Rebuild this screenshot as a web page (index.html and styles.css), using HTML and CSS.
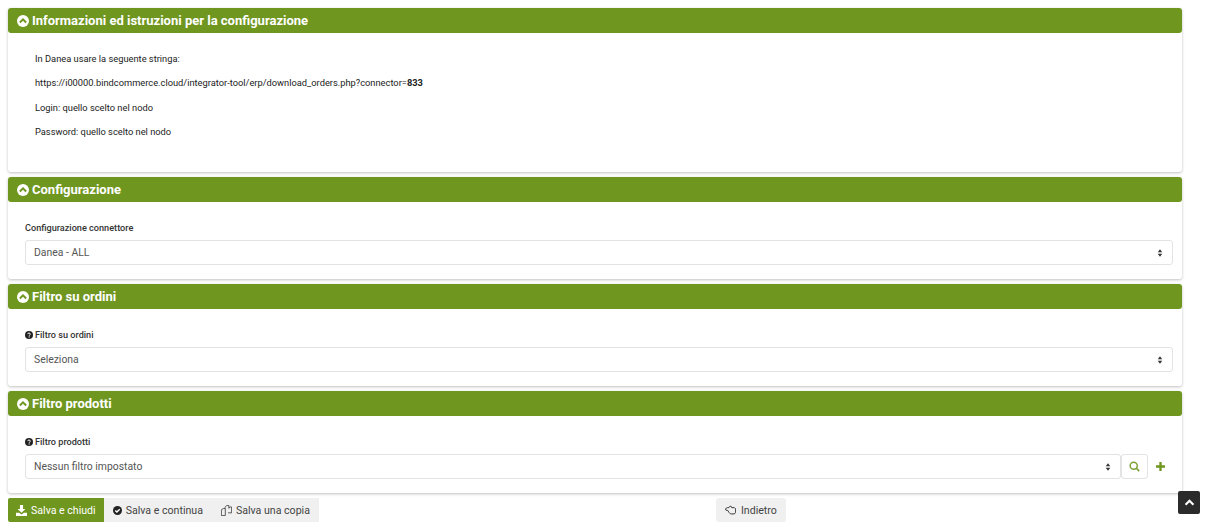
FILE: index.html
```html
<!DOCTYPE html>
<html lang="it">
<head>
    <meta charset="UTF-8">
    <title>Configurazione connettore</title>
    <link rel="stylesheet" href="styles.css">
</head>
<body>
    <section class="panel">
        <h2 class="panel-title">
            <svg class="chevron" viewBox="0 0 16 16"><circle cx="8" cy="8" r="8" fill="#fff"/><path d="M3.800 10 8 5.800l4.200 4.200" fill="none" stroke="#6f961f" stroke-width="2.600"/></svg>
            Informazioni ed istruzioni per la configurazione
        </h2>
        <div class="panel-body info-body">
            <p>In Danea usare la seguente stringa:</p>
            <p>https://i00000.bindcommerce.cloud/integrator-tool/erp/download_orders.php?connector=<b>833</b></p>
            <p>Login: quello scelto nel nodo</p>
            <p>Password: quello scelto nel nodo</p>
        </div>
    </section>

    <section class="panel">
        <h2 class="panel-title">
            <svg class="chevron" viewBox="0 0 16 16"><circle cx="8" cy="8" r="8" fill="#fff"/><path d="M3.800 10 8 5.800l4.200 4.200" fill="none" stroke="#6f961f" stroke-width="2.600"/></svg>
            Configurazione
        </h2>
        <div class="panel-body">
            <label class="field-label">Configurazione connettore</label>
            <div class="select-row">
                <div class="select">Danea - ALL
                    <svg class="updown" viewBox="0 0 8 10"><path d="M4 0 7 4H1zM4 10 1 6h6z" fill="#333"/></svg>
                </div>
            </div>
        </div>
    </section>

    <section class="panel">
        <h2 class="panel-title">
            <svg class="chevron" viewBox="0 0 16 16"><circle cx="8" cy="8" r="8" fill="#fff"/><path d="M3.800 10 8 5.800l4.200 4.200" fill="none" stroke="#6f961f" stroke-width="2.600"/></svg>
            Filtro su ordini
        </h2>
        <div class="panel-body">
            <label class="field-label">
                <svg class="help" viewBox="0 0 16 16"><circle cx="8" cy="8" r="8" fill="#222"/><path d="M5.400 6.200C5.500 4.600 6.600 4 8 4s2.700.8 2.700 2.200c0 1.900-2.400 1.800-2.400 3.300" fill="none" stroke="#fff" stroke-width="1.900"/><rect x="7.200" y="10.800" width="2.200" height="2.200" fill="#fff"/></svg>
                Filtro su ordini
            </label>
            <div class="select-row">
                <div class="select">Seleziona
                    <svg class="updown" viewBox="0 0 8 10"><path d="M4 0 7 4H1zM4 10 1 6h6z" fill="#333"/></svg>
                </div>
            </div>
        </div>
    </section>

    <section class="panel">
        <h2 class="panel-title">
            <svg class="chevron" viewBox="0 0 16 16"><circle cx="8" cy="8" r="8" fill="#fff"/><path d="M3.800 10 8 5.800l4.200 4.200" fill="none" stroke="#6f961f" stroke-width="2.600"/></svg>
            Filtro prodotti
        </h2>
        <div class="panel-body">
            <label class="field-label">
                <svg class="help" viewBox="0 0 16 16"><circle cx="8" cy="8" r="8" fill="#222"/><path d="M5.400 6.200C5.500 4.600 6.600 4 8 4s2.700.8 2.700 2.200c0 1.900-2.400 1.800-2.400 3.300" fill="none" stroke="#fff" stroke-width="1.900"/><rect x="7.200" y="10.800" width="2.200" height="2.200" fill="#fff"/></svg>
                Filtro prodotti
            </label>
            <div class="select-row">
                <div class="select">Nessun filtro impostato
                    <svg class="updown" viewBox="0 0 8 10"><path d="M4 0 7 4H1zM4 10 1 6h6z" fill="#333"/></svg>
                </div>
                <div class="search-btn">
                    <svg viewBox="0 0 14 14" width="11" height="11"><circle cx="6" cy="6" r="4.500" fill="none" stroke="#7da23a" stroke-width="1.900"/><path d="m9.200 9.200 3.800 3.800" stroke="#7da23a" stroke-width="2.200"/></svg>
                </div>
                <div class="add-btn">
                    <svg viewBox="0 0 10 10" width="9" height="9"><path d="M5 0v10M0 5h10" stroke="#6f961f" stroke-width="2.600"/></svg>
                </div>
            </div>
        </div>
    </section>

    <div class="actions">
        <div class="btn-group">
            <a class="btn btn-primary">
                <svg viewBox="0 0 14 14" width="11" height="11"><path d="M5 0h4v5h3L7 10 2 5h3zM0 10h4l3 2 3-2h4v4H0z" fill="#fff"/></svg>
                Salva e chiudi
            </a>
            <a class="btn">
                <svg viewBox="0 0 14 14" width="9" height="9"><circle cx="7" cy="7" r="7" fill="#222"/><path d="m3.500 7 2.500 2.500 4.500-4.500" fill="none" stroke="#fff" stroke-width="2.200"/></svg>
                Salva e continua
            </a>
            <a class="btn">
                <svg viewBox="0 0 14 14" width="11" height="11" fill="none" stroke="#333" stroke-width="1"><path d="M5 4.500V3l2.500-2.500h2.500v4M10 3.500l1.500-1h2V10H9"/><path d="M.5 6 3 4.500h2.500V13.500H.5z"/></svg>
                Salva una copia
            </a>
        </div>
        <a class="btn btn-back">
            <svg viewBox="0 0 14 12" width="11" height="10" fill="none" stroke="#333" stroke-width="1.200"><path d="M.5 4.500 3 3h2L6.500 1 8 1.500 8.500 3H12l1.500 1.500V9L12 11H7L5 9 3.500 6.500H1.500z"/></svg>
            Indietro
        </a>
    </div>

    <a class="to-top">
        <svg viewBox="0 0 12 8" width="11" height="7"><path d="M1.500 6.500 6 2l4.500 4.500" fill="none" stroke="#fff" stroke-width="2.400"/></svg>
    </a>
</body>
</html>
```

FILE: styles.css
```css
body {
    font-family: Roboto, "Liberation Sans", sans-serif;
    margin: 0;
    padding: 8px 24px 0 8px;
    color: #333;
    background: #fff;
}
.panel {
    margin-bottom: 5px;
    border-radius: 3px;
    background: #fff;
    box-shadow: 0 1px 3px rgba(0, 0, 0, 0.25);
}
.panel-title {
    display: flex;
    align-items: center;
    gap: 3px;
    height: 25px;
    margin: 0;
    padding: 0 9px;
    border-radius: 3px;
    background: #6f961f;
    color: #fff;
    font-size: 13px;
    font-weight: 700;
}
.chevron {
    width: 12px;
    height: 12px;
}
.panel-body {
    height: 77px;
    padding: 20px 9px 0 17px;
    box-sizing: border-box;
}
.info-body {
    height: 139px;
    padding: 20px 27px 0;
    font-size: 9.3px;
    color: #222;
}
.info-body p {
    height: 11px;
    margin: 0 0 13.3px;
    line-height: 11px;
}
.field-label {
    display: flex;
    align-items: center;
    gap: 2px;
    height: 11px;
    font-size: 9.15px;
    font-weight: 500;
    color: #333;
}
.help {
    width: 8px;
    height: 8px;
}
.select-row {
    display: flex;
    margin-top: 7px;
}
.select {
    display: flex;
    align-items: center;
    justify-content: space-between;
    flex: 1;
    height: 25px;
    padding: 0 9px 0 8px;
    box-sizing: border-box;
    border: 1px solid #e3e3e3;
    border-radius: 3px;
    font-size: 10.4px;
    color: #555;
}
.updown {
    width: 6px;
    height: 8px;
}
.search-btn {
    display: flex;
    align-items: center;
    justify-content: center;
    width: 27px;
    height: 25px;
    box-sizing: border-box;
    border: 1px solid #e3e3e3;
    border-radius: 3px;
}
.add-btn {
    display: flex;
    align-items: center;
    justify-content: center;
    width: 25px;
    height: 25px;
}
.actions {
    display: flex;
}
.btn-group {
    display: flex;
}
.btn {
    display: flex;
    align-items: center;
    gap: 4px;
    height: 24px;
    padding: 0 9px;
    background: #f0f0f0;
    font-size: 10.6px;
    color: #444;
}
.btn-primary {
    padding: 0 8px;
    background: #6f961f;
    color: #fff;
    border-radius: 2px 0 0 2px;
}
.btn-back {
    gap: 5px;
    margin-left: 397px;
    border-radius: 3px;
}
.to-top {
    position: fixed;
    right: 6px;
    bottom: 13px;
    display: flex;
    align-items: center;
    justify-content: center;
    width: 22px;
    height: 23px;
    border-radius: 2px;
    background: #2b2b2b;
}
```
